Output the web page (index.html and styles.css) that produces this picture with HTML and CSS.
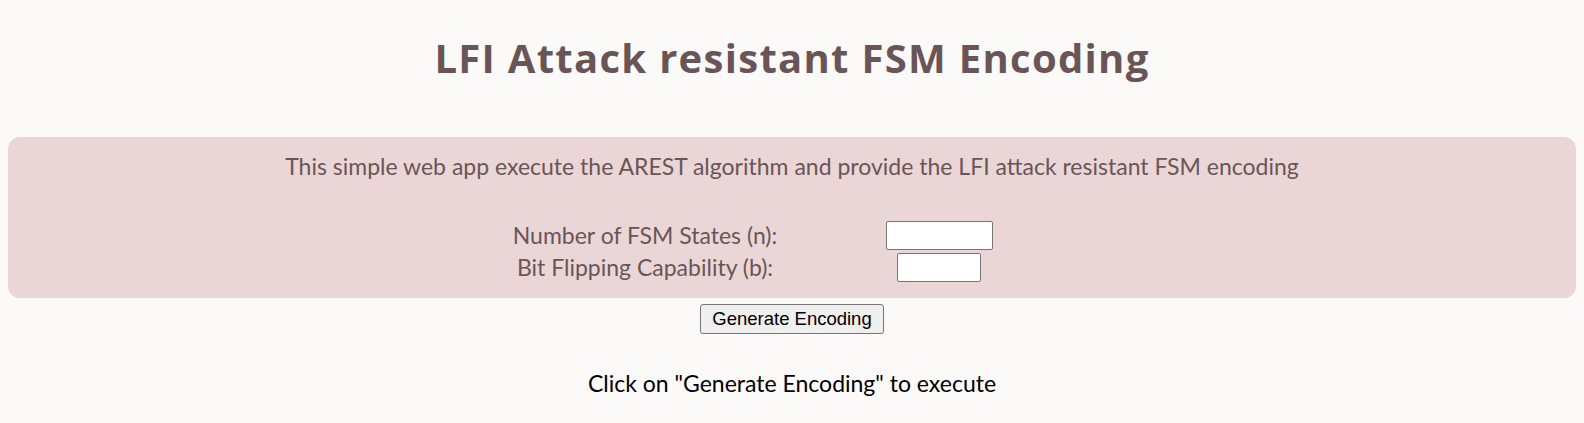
FILE: index.html
```html
<!DOCTYPE html>
<html lang="en">
<head>
<meta charset="utf-8">
<title>LFI Attack resistant FSM Encoding</title>
<link rel="stylesheet" href="styles.css">
</head>
<body>
<h1 class="title">LFI Attack resistant FSM Encoding</h1>
<section class="panel">
  <p class="intro">This simple web app execute the AREST algorithm and provide the LFI attack resistant FSM encoding</p>
  <div class="form-grid">
    <label class="field-label" for="n">Number of FSM States (n):</label>
    <div class="field-cell"><input class="field field-n" id="n" type="text"></div>
    <label class="field-label" for="b">Bit Flipping Capability (b):</label>
    <div class="field-cell"><input class="field field-b" id="b" type="text"></div>
  </div>
</section>
<div class="actions">
  <button class="generate" type="button">Generate Encoding</button>
</div>
<p class="result">Click on "Generate Encoding" to execute</p>
</body>
</html>
```
FILE: styles.css
```css
html, body {
  background: #fcf9f9;
}
body {
  margin: 8px;
  font-family: Lato, "Open Sans", sans-serif;
  color: #6a5556;
}
.title {
  margin: 27px 0 56px;
  font-family: "Open Sans", Lato, sans-serif;
  font-size: 40px;
  line-height: 46px;
  font-weight: 700;
  letter-spacing: 1.3px;
  text-align: center;
  color: #6a5556;
}
.panel {
  background: #ead6d6;
  border-radius: 12px;
  padding: 16px 0 14.5px;
  text-align: center;
}
.intro {
  margin: 0 0 40.5px;
  font-size: 23px;
  line-height: 26px;
}
.form-grid {
  display: grid;
  grid-template-columns: 294px 294px;
  justify-content: center;
  justify-items: center;
  align-items: center;
}
.field-label {
  font-size: 23px;
  line-height: 32px;
  position: relative;
  top: -1px;
}
.field-cell {
  height: 32px;
  display: flex;
  align-items: center;
}
.field {
  box-sizing: border-box;
  height: 29px;
  border: 1px solid #767676;
  border-radius: 2px;
  background: #ffffff;
  padding: 1px 2px;
  font: 16px "Liberation Sans", Arial, sans-serif;
}
.field-n { width: 107px; }
.field-b { width: 84px; }
.actions {
  margin-top: 6px;
  display: flex;
  justify-content: center;
}
.generate {
  box-sizing: border-box;
  height: 30px;
  padding: 0 11px;
  border: 1px solid #767676;
  border-radius: 3px;
  background: #efefef;
  color: #000000;
  font: 18.5px/22px "Liberation Sans", Arial, sans-serif;
}
.result {
  margin: 35.5px 0 0;
  font-size: 23px;
  line-height: 26px;
  text-align: center;
  color: #000000;
}
```
